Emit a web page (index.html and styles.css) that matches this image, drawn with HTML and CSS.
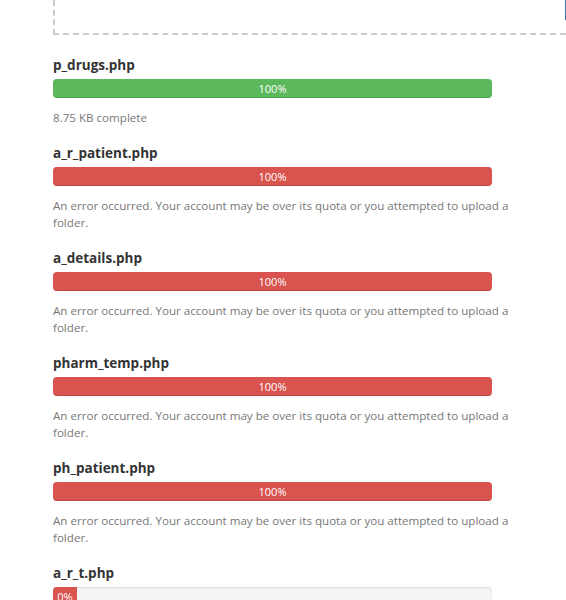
FILE: index.html
```html
<!DOCTYPE html>
<html>
<head>
<meta charset="utf-8">
<link rel="stylesheet" href="styles.css">
</head>
<body>
<div class="page">
  <div class="dropzone">
    <div class="dz-button"></div>
  </div>
  <div class="uploads">
    <div class="file">
      <div class="name">p_drugs.php</div>
      <div class="progress"><div class="bar success" style="width:100%">100%</div></div>
      <div class="status">8.75 KB complete</div>
    </div>
    <div class="file">
      <div class="name">a_r_patient.php</div>
      <div class="progress"><div class="bar danger" style="width:100%">100%</div></div>
      <div class="status">An error occurred. Your account may be over its quota or you attempted to upload a folder.</div>
    </div>
    <div class="file">
      <div class="name">a_details.php</div>
      <div class="progress"><div class="bar danger" style="width:100%">100%</div></div>
      <div class="status">An error occurred. Your account may be over its quota or you attempted to upload a folder.</div>
    </div>
    <div class="file">
      <div class="name">pharm_temp.php</div>
      <div class="progress"><div class="bar danger" style="width:100%">100%</div></div>
      <div class="status">An error occurred. Your account may be over its quota or you attempted to upload a folder.</div>
    </div>
    <div class="file">
      <div class="name">ph_patient.php</div>
      <div class="progress"><div class="bar danger" style="width:100%">100%</div></div>
      <div class="status">An error occurred. Your account may be over its quota or you attempted to upload a folder.</div>
    </div>
    <div class="file">
      <div class="name">a_r_t.php</div>
      <div class="progress"><div class="bar danger zero" style="width:0%">0%</div></div>
      <div class="status"></div>
    </div>
  </div>
</div>
</body>
</html>
```

FILE: styles.css
```css
html, body {
  margin: 0;
  padding: 0;
  background: #fff;
  overflow: hidden;
  height: 600px;
}
body {
  font-family: "Open Sans", "Liberation Sans", sans-serif;
  color: #333;
}
.page {
  padding-left: 53px;
}
.dropzone {
  display: flex;
  justify-content: flex-end;
  height: 33px;
  border: 2px dashed #ccc;
  border-top: 0;
  border-right: 0;
}
.dz-button {
  width: 1px;
  height: 20px;
  background: #337ab7;
}
.uploads {
  padding-top: 21px;
  width: 480px;
}
.file {
  margin-bottom: 18px;
}
.name {
  font-size: 13.5px;
  font-weight: 700;
  line-height: 18px;
  height: 18px;
  margin-bottom: 5px;
  color: #333;
}
.progress {
  width: 439px;
  height: 19px;
  background: #f5f5f5;
  border-radius: 4px;
  box-shadow: inset 0 1px 2px rgba(0,0,0,0.1);
  overflow: hidden;
  margin-bottom: 11px;
  display: flex;
}
.bar {
  height: 19px;
  line-height: 19px;
  font-size: 11px;
  color: #fff;
  text-align: center;
  box-shadow: inset 0 -1px 0 rgba(0,0,0,0.15);
}
.bar.success { background: #5cb85c; }
.bar.danger { background: #d9534f; }
.bar.zero { min-width: 24px; }
.status {
  font-size: 11.6px;
  line-height: 17px;
  color: #777;
}
```
